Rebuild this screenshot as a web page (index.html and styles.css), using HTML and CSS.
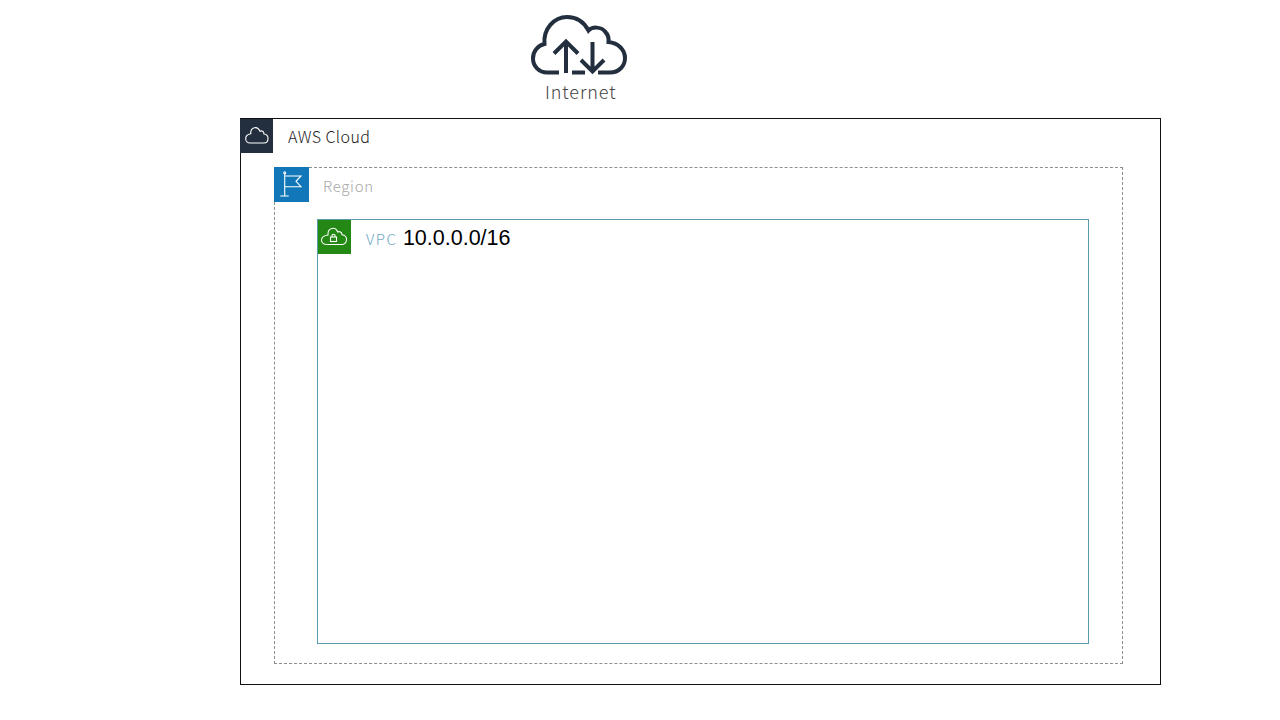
FILE: index.html
```html
<!DOCTYPE html>
<html lang="en">
<head>
<meta charset="utf-8">
<title>AWS Network Diagram</title>
<link rel="stylesheet" href="styles.css">
</head>
<body>
<div class="page">
  <div class="internet">
    <svg class="internet-icon" viewBox="0 0 98 62" width="98" height="62" fill="none" stroke="#232f3e" stroke-width="4">
      <path d="M29 58.500H17C9 58.500 3 52 3 44.500C3 37 8 31.500 14.500 30C13 15 24 3 37 3C46 3 54 8 58.500 16.500C62 12.500 71 12.500 75 17.500C78 20.500 79 24 78.500 28C88 29 95 35.500 95 44C95 52 89 58.500 80 58.500H68"/>
      <path d="M36 59V28M24 39.500L36 27.500L48 39.500"/>
      <path d="M62.500 28V57M51 46L62.500 57.500L74 46"/>
      <path d="M42 58.500H55"/>
    </svg>
    <div class="internet-label">Internet</div>
  </div>
  <section class="group aws">
    <div class="group-head">
      <div class="tag tag-aws">
        <svg viewBox="0 0 33 34" width="33" height="34" fill="none" stroke="#fff" stroke-width="1.100">
          <path d="M10 24H24C26.500 24 28 22 28 19.500C28 17 26.300 15.200 24 15C24 12.500 21.800 11.200 20 12.300C18.800 9.500 16.500 8.300 14.500 8.700C12 9.200 10.500 11.500 10.800 14.800C8 15.200 5.700 17 5.700 19.700C5.700 22.300 7.700 24 10 24Z"/>
        </svg>
      </div>
      <div class="title title-aws">AWS Cloud</div>
    </div>
    <section class="group region">
      <div class="group-head">
        <div class="tag tag-region">
          <svg viewBox="0 0 35 35" width="35" height="35" fill="none" stroke="#fff" stroke-width="1.100">
            <circle cx="10.700" cy="5.700" r="1"/>
            <path d="M10.700 6.700V29M6.300 29H14.700M10.700 9H27L22 14.300L27 19.700H10.700"/>
          </svg>
        </div>
        <div class="title title-region">Region</div>
      </div>
      <section class="group vpc">
        <div class="group-head">
          <div class="tag tag-vpc">
            <svg viewBox="0 0 33 34" width="33" height="34" fill="none" stroke="#fff" stroke-width="1.100">
              <path d="M9 24.500H23.500C26.500 24.500 28.500 22.300 28.500 19.500C28.500 17 26.500 15 24 14.700C24 12.300 21.500 11 19.700 12C18.500 9 16 7.800 13.700 8.500C11 9.200 9.700 12 10 15C6.500 15.500 3.500 17 3.500 20C3.500 22.700 6 24.500 9 24.500Z"/>
              <rect x="12.500" y="17" width="6" height="4.500"/>
              <path d="M14 17V15.500C14 13.800 17 13.800 17 15.500V17"/>
            </svg>
          </div>
          <div class="title title-vpc"><span class="vpc-name">VPC</span> <span class="vpc-cidr">10.0.0.0/16</span></div>
        </div>
      </section>
    </section>
  </section>
</div>
</body>
</html>
```

FILE: styles.css
```css
* {
  box-sizing: border-box;
}

html,
body {
  margin: 0;
  padding: 0;
  background: #fff;
}

body {
  width: 1280px;
  height: 720px;
  overflow: hidden;
  font-family: "Noto Sans CJK JP", "Noto Sans", sans-serif;
  font-weight: 300;
}

.page {
  padding-left: 240px;
}

.internet {
  height: 118px;
  width: 680px;
  padding-top: 14px;
  padding-left: 290px;
  display: flex;
  flex-direction: column;
}

.internet-icon {
  display: block;
}

.internet-label {
  width: 100px;
  padding-left: 15px;
  font-size: 18px;
  line-height: 30px;
  letter-spacing: 0.9px;
  color: #444;
}

.group {
  background: #fff;
}

.aws {
  width: 921px;
  height: 567px;
  border: 1px solid #111;
}

.region {
  width: 849px;
  height: 497px;
  margin: 12px 0 0 33px;
  border: 1px dashed #8f8f8f;
}

.vpc {
  width: 772px;
  height: 425px;
  margin: 15px 0 0 42px;
  border: 1px solid #5b9bb0;
}

.group-head {
  display: flex;
  align-items: flex-start;
  height: 36px;
}

.tag {
  flex: none;
  display: block;
}

.tag svg {
  display: block;
}

.tag-aws {
  width: 33px;
  height: 34px;
  margin-left: -1px;
  background: #232f3e;
}

.tag-region {
  width: 35px;
  height: 35px;
  margin: -1px 0 0 -1px;
  background: #1177b8;
}

.tag-vpc {
  width: 33px;
  height: 34px;
  background: #248814;
}

.title {
  white-space: nowrap;
}

.title-aws {
  margin-left: 15px;
  font-size: 16px;
  line-height: 34px;
  letter-spacing: 0.4px;
  color: #222;
}

.title-region {
  margin-left: 14px;
  font-size: 15px;
  line-height: 36px;
  letter-spacing: 0.7px;
  color: #a8a8a8;
}

.title-vpc {
  margin-left: 15px;
  line-height: 36px;
}

.vpc-name {
  font-size: 15px;
  letter-spacing: 1.500px;
  color: #6fa8c4;
}

.vpc-cidr {
  margin-left: 2px;
  font-family: "Liberation Sans", Arial, sans-serif;
  font-weight: 400;
  font-size: 21.500px;
  color: #000;
}
```
